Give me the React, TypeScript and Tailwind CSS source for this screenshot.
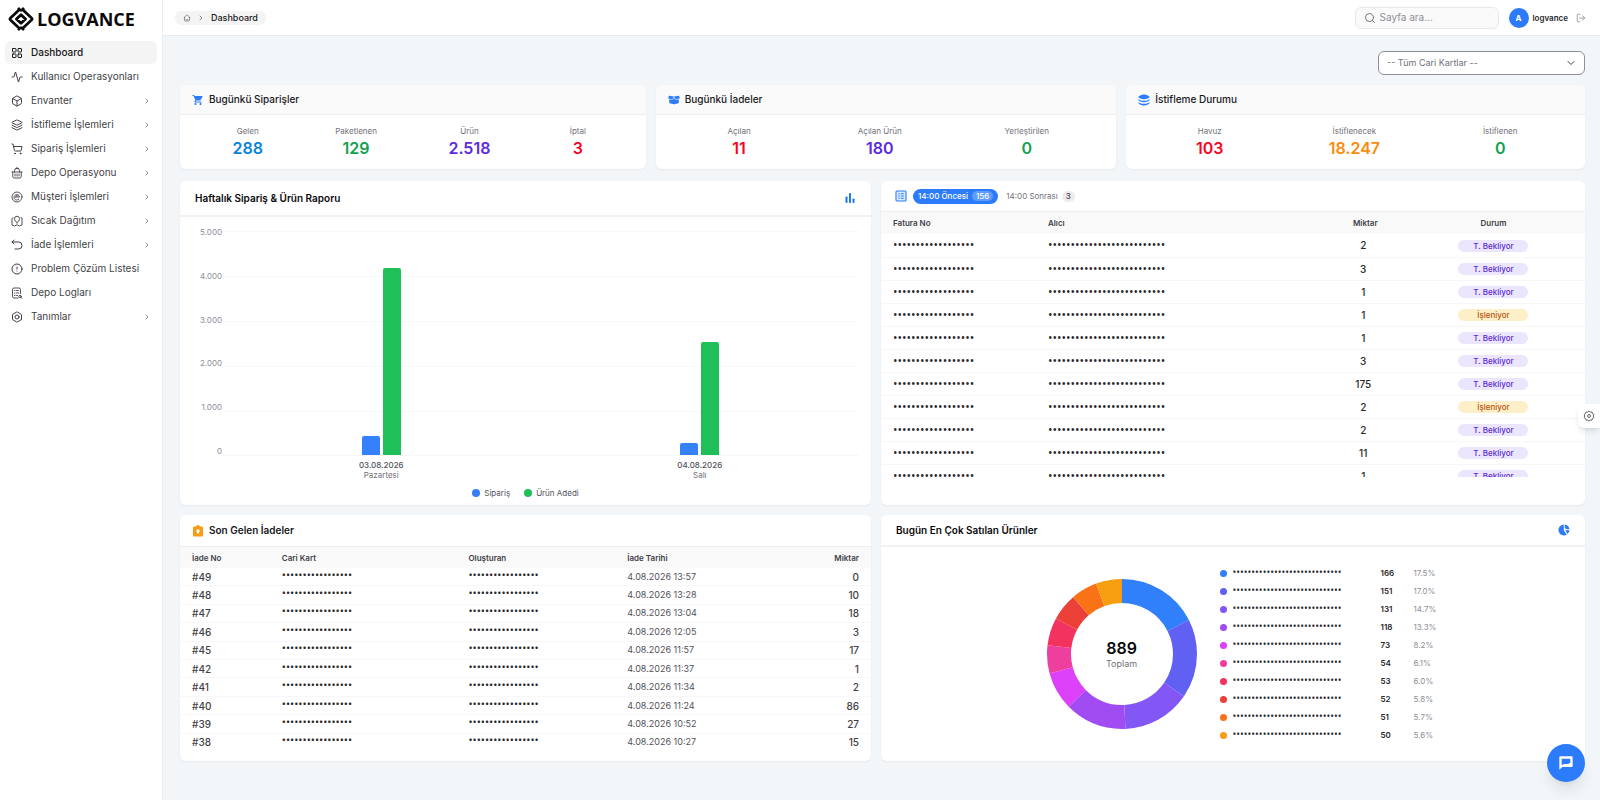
import React from 'react';
import {
  Activity,
  Bolt,
  Box,
  ChevronDown,
  ChevronRight,
  CircleAlert,
  Layers,
  LayoutGrid,
  LogOut,
  Search,
  ShoppingCart,
  type LucideIcon,
} from 'lucide-react';
import { FaBoxOpen } from 'react-icons/fa';
import { MdShoppingCart } from 'react-icons/md';

type IconProps = { className?: string };

const BasketIcon = ({ className }: IconProps) => (
  <svg viewBox="0 0 24 24" fill="none" stroke="currentColor" strokeWidth="1.8" strokeLinecap="round" strokeLinejoin="round" className={className}>
    <path d="M2 10h20M3.500 10v9a3 3 0 0 0 3 3h11a3 3 0 0 0 3-3v-9M7 10V7.500a5 5 0 0 1 10 0V10M8 14v4M12 14v4M16 14v4M10 3.500V2h4v1.500" />
  </svg>
);

const EuroIcon = ({ className }: IconProps) => (
  <svg viewBox="0 0 24 24" fill="none" stroke="currentColor" strokeWidth="1.8" strokeLinecap="round" className={className}>
    <circle cx="12" cy="12" r="10" />
    <path d="M15.500 16.500A5.500 5.500 0 1 1 17 12H9M9.500 12a2.800 2.800 0 0 1 4.500-2" />
  </svg>
);

const MapIcon = ({ className }: IconProps) => (
  <svg viewBox="0 0 24 24" fill="none" stroke="currentColor" strokeWidth="1.8" strokeLinecap="round" strokeLinejoin="round" className={className}>
    <path d="M12 15.500c-2.500-2.300-5-4.600-5-8a5 5 0 0 1 10 0c0 3.400-2.500 5.700-5 8z" />
    <path d="M4.500 5.500C3 5.500 2 6.500 2 8v12l5 2 5-2.500 5 2.500 5-2V6l-2-1" />
  </svg>
);

const BackIcon = ({ className }: IconProps) => (
  <svg viewBox="0 0 24 24" fill="none" stroke="currentColor" strokeWidth="2" strokeLinecap="round" strokeLinejoin="round" className={className}>
    <path d="M2 6h13a7 7 0 0 1 0 14H8M6 2 2 6l4 4" />
  </svg>
);

const LogIcon = ({ className }: IconProps) => (
  <svg viewBox="0 0 24 24" fill="none" stroke="currentColor" strokeWidth="1.8" strokeLinecap="round" strokeLinejoin="round" className={className}>
    <path d="M19 13V5a3 3 0 0 0-3-3H6a3 3 0 0 0-3 3v14a3 3 0 0 0 3 3h8M7 7h1M11 7h4M7 12h1M11 12h4M7 17h1M11 17h2" />
    <circle cx="18" cy="19" r="2.500" />
    <path d="m20 21 2 1.500" />
  </svg>
);

const HomeIcon = ({ className }: IconProps) => (
  <svg viewBox="0 0 24 24" fill="none" stroke="currentColor" strokeWidth="1.8" strokeLinecap="round" strokeLinejoin="round" className={className}>
    <path d="M3 11.500 10 3.800a3 3 0 0 1 4 0L21 11.500M4.500 10v8a3 3 0 0 0 3 3h9a3 3 0 0 0 3-3v-8M9 17h6" />
  </svg>
);

const GearIcon = ({ className }: IconProps) => (
  <svg viewBox="0 0 24 24" fill="none" stroke="currentColor" strokeWidth="1.8" strokeLinejoin="round" className={className}>
    <path d="M12 2l2.600 2.200 3.400-.2.900 3.300 2.900 1.800-1.300 3 1.300 3.100-2.900 1.800-.9 3.200-3.400-.1L12 22l-2.600-1.900-3.400.1-.9-3.200-2.900-1.800 1.300-3.100-1.300-3 2.900-1.800.9-3.300 3.400.2z" />
    <circle cx="12" cy="12" r="3" />
  </svg>
);

const LayersSolidIcon = ({ className }: IconProps) => (
  <svg viewBox="0 0 24 24" fill="currentColor" className={className}>
    <path d="M12 1C8 1 1 4 1 6s7 4.500 11 4.500S23 8 23 6s-7-5-11-5z" />
    <path d="M1 9.800c3 2.800 7 3.700 11 3.700s8-.9 11-3.700V12c0 2-7 4.500-11 4.500S1 14 1 12zM1 15.800c3 2.800 7 3.700 11 3.700s8-.9 11-3.700V18c0 2-7 5-11 5S1 20 1 18z" />
  </svg>
);

const BarsIcon = ({ className }: IconProps) => (
  <svg viewBox="0 0 24 24" fill="currentColor" className={className}>
    <rect x="3" y="9" width="4" height="13" rx="1.500" />
    <rect x="10" y="2" width="4" height="20" rx="1.500" />
    <rect x="17" y="13" width="4" height="9" rx="1.500" />
  </svg>
);

const ListIcon = ({ className }: IconProps) => (
  <svg viewBox="0 0 24 24" fill="none" stroke="currentColor" strokeWidth="2.200" className={className}>
    <rect x="2" y="2" width="20" height="20" rx="2" fill="#dbeafe" />
    <path d="M6.500 7.500h3M11.500 7.500h6M6.500 12h3M11.500 12h6M6.500 16.500h3M11.500 16.500h6" />
  </svg>
);

const ReturnIcon = ({ className }: IconProps) => (
  <svg viewBox="0 0 24 24" fill="currentColor" className={className}>
    <path d="M4 3h4.500a3.600 3.600 0 0 1 7 0H20a2 2 0 0 1 2 2v16a2 2 0 0 1-2 2H4a2 2 0 0 1-2-2V5a2 2 0 0 1 2-2z" />
    <path d="M12 7.500 17 13l-3 .2V17h-4v-3.800L7 13z" fill="#fff" />
  </svg>
);

const PieIcon = ({ className }: IconProps) => (
  <svg viewBox="0 0 24 24" fill="currentColor" className={className}>
    <path d="M11.500 1v11.500l6 9A11 11 0 1 1 11.500 1z" />
    <path d="M13.500 1A11 11 0 0 1 23 10.500h-5.500L13.500 8zM14.500 12.500H23a11 11 0 0 1-4 7.500z" />
  </svg>
);

const ChatIcon = ({ className }: IconProps) => (
  <svg viewBox="0 0 24 24" className={className}>
    <path d="M3.500 2h17A1.500 1.500 0 0 1 22 3.500v13a1.500 1.500 0 0 1-1.500 1.500H6.500L2 22V3.500A1.500 1.500 0 0 1 3.500 2z" fill="#fff" />
    <path d="M5.500 5.500h13v6l-3.500 2H9l-3.500 2z" fill="#2b7bfb" />
  </svg>
);

const LogoMark = ({ className }: IconProps) => (
  <svg viewBox="0 0 52 48" fill="none" stroke="#0a0a0a" strokeWidth="5.500" strokeLinejoin="round" className={className}>
    <path d="M20 2l3 3L5 22q-2 2 0 4l18 17-3 3M32 2l-3 3 18 17q2 2 0 4L29 43l3 3" />
    <path d="M26 15.500 17 24l9 8.500 9-8.500z" strokeWidth="6" />
    <path d="M23 5l3 2.500L29 5M23 43l3-2.500 3 2.500" strokeWidth="4" />
  </svg>
);

const menu: { icon: LucideIcon | React.FC<IconProps>; label: string; active?: boolean; sub?: boolean }[] = [
  { icon: LayoutGrid, label: 'Dashboard', active: true },
  { icon: Activity, label: 'Kullanıcı Operasyonları' },
  { icon: Box, label: 'Envanter', sub: true },
  { icon: Layers, label: 'İstifleme İşlemleri', sub: true },
  { icon: ShoppingCart, label: 'Sipariş İşlemleri', sub: true },
  { icon: BasketIcon, label: 'Depo Operasyonu', sub: true },
  { icon: EuroIcon, label: 'Müşteri İşlemleri', sub: true },
  { icon: MapIcon, label: 'Sıcak Dağıtım', sub: true },
  { icon: BackIcon, label: 'İade İşlemleri', sub: true },
  { icon: CircleAlert, label: 'Problem Çözüm Listesi' },
  { icon: LogIcon, label: 'Depo Logları' },
  { icon: Bolt, label: 'Tanımlar', sub: true },
];

const statCards = [
  {
    icon: MdShoppingCart,
    title: 'Bugünkü Siparişler',
    stats: [
      { label: 'Gelen', value: '288', color: 'text-[#0984d8]' },
      { label: 'Paketlenen', value: '129', color: 'text-[#12a150]' },
      { label: 'Ürün', value: '2.518', color: 'text-[#5b2be0]' },
      { label: 'İptal', value: '3', color: 'text-[#f5051f]' },
    ],
  },
  {
    icon: FaBoxOpen,
    title: 'Bugünkü İadeler',
    stats: [
      { label: 'Açılan', value: '11', color: 'text-[#f5051f]' },
      { label: 'Açılan Ürün', value: '180', color: 'text-[#5b2be0]' },
      { label: 'Yerleştirilen', value: '0', color: 'text-[#12a150]' },
    ],
  },
  {
    icon: LayersSolidIcon,
    title: 'İstifleme Durumu',
    stats: [
      { label: 'Havuz', value: '103', color: 'text-[#f5051f]' },
      { label: 'İstiflenecek', value: '18.247', color: 'text-[#fb8c0a]' },
      { label: 'İstiflenen', value: '0', color: 'text-[#12a150]' },
    ],
  },
];

const CHART_MAX = 5000;
const ticks = ['5.000', '4.000', '3.000', '2.000', '1.000', '0'];
const days = [
  { date: '03.08.2026', day: 'Pazartesi', orders: 435, items: 4180 },
  { date: '04.08.2026', day: 'Salı', orders: 275, items: 2520 },
];

const invoices = [
  { qty: 2 },
  { qty: 3 },
  { qty: 1 },
  { qty: 1, processing: true },
  { qty: 1 },
  { qty: 3 },
  { qty: 175 },
  { qty: 2, processing: true },
  { qty: 2 },
  { qty: 11 },
  { qty: 1 },
];

const returns = [
  { no: '#49', date: '4.08.2026 13:57', qty: 0 },
  { no: '#48', date: '4.08.2026 13:28', qty: 10 },
  { no: '#47', date: '4.08.2026 13:04', qty: 18 },
  { no: '#46', date: '4.08.2026 12:05', qty: 3 },
  { no: '#45', date: '4.08.2026 11:57', qty: 17 },
  { no: '#42', date: '4.08.2026 11:37', qty: 1 },
  { no: '#41', date: '4.08.2026 11:34', qty: 2 },
  { no: '#40', date: '4.08.2026 11:24', qty: 86 },
  { no: '#39', date: '4.08.2026 10:52', qty: 27 },
  { no: '#38', date: '4.08.2026 10:27', qty: 15 },
];

const products = [
  { qty: 166, share: '17.5%', color: '#3080fb' },
  { qty: 151, share: '17.0%', color: '#6060f2' },
  { qty: 131, share: '14.7%', color: '#8257f5' },
  { qty: 118, share: '13.3%', color: '#a14bf3' },
  { qty: 73, share: '8.2%', color: '#dc40f8' },
  { qty: 54, share: '6.1%', color: '#ee3f9f' },
  { qty: 53, share: '6.0%', color: '#f23360' },
  { qty: 52, share: '5.8%', color: '#ea4038' },
  { qty: 51, share: '5.7%', color: '#f97216' },
  { qty: 50, share: '5.6%', color: '#f79e10' },
];

const masked = (length: number) => '•'.repeat(length);

const Donut = () => {
  const radius = 63;
  const sum = products.reduce((acc, p) => acc + parseFloat(p.share), 0);
  let start = 0;

  return (
    <svg viewBox="0 0 152 152" className="w-38 h-38 -rotate-90">
      {products.map((p) => {
        const length = (parseFloat(p.share) / sum) * 100;
        const offset = start;
        start += length;
        return (
          <circle
            key={p.color}
            cx="76"
            cy="76"
            r={radius}
            fill="none"
            stroke={p.color}
            strokeWidth="24"
            pathLength="100"
            strokeDasharray={`${length} ${100 - length}`}
            strokeDashoffset={-offset}
          />
        );
      })}
    </svg>
  );
};

const Card = ({ className = '', children }: { className?: string; children: React.ReactNode }) => (
  <section className={`bg-white rounded-md shadow-xs overflow-hidden ${className}`}>{children}</section>
);

const Sidebar = () => (
  <aside className="w-[163px] shrink-0 bg-white border-r border-[#eceef0]">
    <a href="#" className="flex items-center gap-[3px] h-[37px] px-2 text-[#0a0a0a]">
      <LogoMark className="w-[26px] h-6" />
      <span className="font-['Open_Sans',sans-serif] text-lg leading-6 font-bold">LOGVANCE</span>
    </a>
    <nav className="flex flex-col gap-px px-[5px] pt-1">
      {menu.map((item) => (
        <a
          key={item.label}
          href="#"
          className={`flex items-center h-[23px] pl-1.5 pr-1.5 rounded-md text-[10px] ${
            item.active ? 'bg-[#f4f4f4] text-[#18181b] font-medium' : 'text-[#3f3f46]'
          }`}
        >
          <item.icon className="w-3 h-3 mr-2" />
          <span className="flex-1 whitespace-nowrap">{item.label}</span>
          {item.sub && <ChevronRight className="w-2 h-2 text-[#52525b]" />}
        </a>
      ))}
    </nav>
  </aside>
);

const Header = () => (
  <header className="flex items-center justify-between h-9 pl-3 pr-3.5 bg-white border-b border-[#e8eaed]">
    <nav aria-label="breadcrumb" className="flex items-center gap-1.5 h-3.5 px-2 rounded-md bg-[#f4f4f5] text-[9px]">
      <a href="#" aria-label="Ana sayfa">
        <HomeIcon className="w-2 h-2 text-[#52525b]" />
      </a>
      <ChevronRight className="w-2 h-2 text-[#52525b]" />
      <span className="font-medium text-[#18181b]">Dashboard</span>
    </nav>
    <div className="flex items-center">
      <label className="flex items-center gap-1 w-36 h-[22px] px-2 mr-2.5 rounded-md border border-[#e9e9ec] bg-[#fafafa]">
        <Search className="w-3 h-3 shrink-0 text-[#71717a]" />
        <input type="search" aria-label="Sayfa ara" placeholder="Sayfa ara..." className="w-full text-[10px] outline-none placeholder:text-[#8e8e96]" />
      </label>
      <span className="flex items-center justify-center w-5 h-5 mr-1 rounded-full bg-[#2b7bfb] text-[8px] font-bold text-white">A</span>
      <span className="mr-2 text-[8px] font-semibold text-[#27272a]">logvance</span>
      <button type="button" aria-label="Çıkış">
        <LogOut className="w-2.5 h-2.5 text-[#8e8e96]" />
      </button>
    </div>
  </header>
);

const WeeklyReport = () => (
  <Card className="flex flex-col">
    <div className="flex items-center justify-between h-9 px-[15px] border-b-2 border-[#f0f1f3]">
      <h2 className="text-[10px] font-semibold text-[#09090b]">Haftalık Sipariş & Ürün Raporu</h2>
      <BarsIcon className="w-3 h-3 text-[#1f76f2]" />
    </div>
    <div className="flex flex-1 pl-5 pr-3 pt-[9px]">
      <div className="flex flex-col justify-between w-[22px] h-[231px] text-right text-[8px] leading-3 text-[#8e8e96]">
        {ticks.map((tick) => (
          <span key={tick}>{tick}</span>
        ))}
      </div>
      <div className="flex-1 pt-[5px]">
        <div className="flex h-[225px] bg-[repeating-linear-gradient(#f9f9fa_0_1px,transparent_1px_45px)] border-b border-[#f7f7f8]">
          {days.map((d) => (
            <div key={d.date} className="flex flex-1 items-end justify-center gap-[3px]">
              <div className="w-[18px] rounded-t-xs bg-[#3580fb]" style={{ height: `${(d.orders / CHART_MAX) * 100}%` }} />
              <div className="w-[18px] rounded-t-xs bg-[#1fc05a]" style={{ height: `${(d.items / CHART_MAX) * 100}%` }} />
            </div>
          ))}
        </div>
        <div className="flex pt-1 text-center text-[8px] leading-[10px]">
          {days.map((d) => (
            <div key={d.date} className="flex-1">
              <div className="font-medium text-[#52525b]">{d.date}</div>
              <div className="text-[#71717a]">{d.day}</div>
            </div>
          ))}
        </div>
      </div>
    </div>
    <div className="flex justify-center gap-3.5 pb-1.5 text-[8px] leading-3 text-[#52525b]">
      <span className="flex items-center gap-1">
        <i className="w-2 h-2 rounded-full bg-[#3580fb]" />
        Sipariş
      </span>
      <span className="flex items-center gap-1">
        <i className="w-2 h-2 rounded-full bg-[#1fc05a]" />
        Ürün Adedi
      </span>
    </div>
  </Card>
);

const Invoices = () => (
  <Card className="pb-7">
    <div className="flex items-center h-[30px] px-3.5 text-[8px]">
      <ListIcon className="w-3 h-3 mr-1.5 text-[#2b7bfb]" />
      <button type="button" className="flex items-center gap-1 h-[15px] px-[5px] rounded-full bg-[#2b7bfb] font-medium text-white">
        14:00 Öncesi
        <span className="px-1 rounded-full bg-white/25 leading-[10px]">156</span>
      </button>
      <button type="button" className="flex items-center gap-1 h-[15px] px-2 text-[#71717a]">
        14:00 Sonrası
        <span className="px-1 rounded-full bg-[#ececee] leading-[11px] font-medium text-[#3f3f46]">3</span>
      </button>
    </div>
    {/* the last row scrolls under the bottom edge */}
    <div className="h-[266px] overflow-y-auto [scrollbar-width:none] border-t border-[#eceef0]">
      <table className="w-full table-fixed">
        <thead>
          <tr className="h-[22px] bg-[#f9f9fa] text-[8px] text-[#3f3f46]">
            <th className="w-[22%] pl-3 text-left font-semibold">Fatura No</th>
            <th className="pl-3 text-left font-semibold">Alıcı</th>
            <th className="w-[11%] pl-1 text-center font-semibold">Miktar</th>
            <th className="w-[26%] text-center font-semibold">Durum</th>
          </tr>
        </thead>
        <tbody>
          {invoices.map((row, index) => (
            <tr key={index} className="h-[23px] border-b border-[#f6f6f7]">
              <td className="pl-3 font-['Open_Sans',sans-serif] text-[12px] leading-4 text-[#27272a]">{masked(18)}</td>
              <td className="pl-3 font-['Open_Sans',sans-serif] text-[12px] leading-4 text-[#27272a]">{masked(26)}</td>
              <td className="text-center text-[10px] leading-4 font-medium text-[#27272a]">{row.qty}</td>
              <td className="text-center text-[8px]">
                <span
                  className={`inline-block w-[70px] rounded-full leading-3 font-medium align-middle ${
                    row.processing ? 'bg-[#fdf0c9] text-[#b9540c]' : 'bg-[#ebe5fd] text-[#5b2bd6]'
                  }`}
                >
                  {row.processing ? 'İşleniyor' : 'T. Bekliyor'}
                </span>
              </td>
            </tr>
          ))}
        </tbody>
      </table>
    </div>
  </Card>
);

const Returns = () => (
  <Card className="pb-2.5">
    <div className="flex items-center gap-[5px] h-8 px-3 border-b border-[#eceef0]">
      <ReturnIcon className="w-3 h-3 text-[#fb9a14]" />
      <h2 className="text-[10px] font-semibold text-[#18181b]">Son Gelen İadeler</h2>
    </div>
    <table className="w-full h-[204px] table-fixed text-[10px] leading-4 text-[#3f3f46]">
      <thead>
        <tr className="h-[21px] bg-[#f9f9fa] text-[8px]">
          <th className="w-[13%] pl-3 text-left font-semibold">İade No</th>
          <th className="w-[27%] pl-3 text-left font-semibold">Cari Kart</th>
          <th className="w-[23%] pl-3 text-left font-semibold">Oluşturan</th>
          <th className="pl-3 text-left font-semibold">İade Tarihi</th>
          <th className="w-[15%] pr-3 text-right font-semibold">Miktar</th>
        </tr>
      </thead>
      <tbody>
        {returns.map((row) => (
          <tr key={row.no} className="border-b border-[#f7f7f8] last:border-0">
            <td className="pl-3 font-medium">{row.no}</td>
            <td className="pl-3 pb-1 font-['Open_Sans',sans-serif] text-[11px] leading-3 text-[#27272a]">{masked(17)}</td>
            <td className="pl-3 pb-1 font-['Open_Sans',sans-serif] text-[11px] leading-3 text-[#27272a]">{masked(17)}</td>
            <td className="pl-3 text-[9px] text-[#52525b]">{row.date}</td>
            <td className="pr-3 text-right font-medium">{row.qty}</td>
          </tr>
        ))}
      </tbody>
    </table>
  </Card>
);

const BestSellers = () => (
  <Card className="flex flex-col">
    <div className="flex items-center justify-between h-8 px-[15px] border-b-2 border-[#f0f1f3]">
      <h2 className="text-[10px] font-semibold text-[#09090b]">Bugün En Çok Satılan Ürünler</h2>
      <PieIcon className="w-3 h-3 text-[#2b7bfb]" />
    </div>
    <div className="flex flex-1 items-center justify-center gap-[22px] pl-4">
      <div className="relative">
        <Donut />
        <div className="absolute inset-0 flex flex-col items-center justify-center">
          <strong className="text-base leading-5 font-semibold text-[#09090b]">889</strong>
          <span className="text-[9px] leading-3 text-[#71717a]">Toplam</span>
        </div>
      </div>
      <ul className="flex flex-col text-[8px]">
        {products.map((p) => (
          <li key={p.color} className="flex items-center h-[18px]">
            <i className="w-[7px] h-[7px] mr-1.5 rounded-full" style={{ backgroundColor: p.color }} />
            <span className="w-[148px] pb-0.5 font-['Open_Sans',sans-serif] text-[10px] leading-3 text-[#27272a]">{masked(29)}</span>
            <span className="w-[33px] font-semibold text-[#27272a]">{p.qty}</span>
            <span className="text-[#8e8e96]">{p.share}</span>
          </li>
        ))}
      </ul>
    </div>
  </Card>
);

const App = () => {
  return (
    <div className="flex min-h-screen bg-[#f3f6f8] font-['Inter',sans-serif]">
      <Sidebar />
      <div className="flex-1 min-w-0">
        <Header />
        <main className="flex flex-col px-[15px] pl-[17px] pt-[15px]">
          <div className="relative self-end w-[207px] mb-2.5">
            <select
              aria-label="Cari kart"
              className="block w-full h-6 pl-2 pr-6 appearance-none rounded-md border border-[#8e8e9a] bg-white text-[9px] text-[#71717a]"
            >
              <option>-- Tüm Cari Kartlar --</option>
            </select>
            <ChevronDown className="absolute right-2 top-1.5 w-3 h-3 text-[#3f3f46] pointer-events-none" />
          </div>

          <div className="grid grid-cols-[466fr_461fr_459fr] gap-2.5 mb-3">
            {statCards.map((card) => (
              <Card key={card.title}>
                <div className="flex items-center gap-[5px] h-[30px] px-3 border-b border-[#eceef0] bg-[#fafafa]">
                  <card.icon className="w-3 h-3 text-[#2b7bfb]" />
                  <h2 className="text-[10px] font-medium text-[#18181b]">{card.title}</h2>
                </div>
                <div className="flex justify-around px-4 py-2.5">
                  {card.stats.map((stat) => (
                    <div key={stat.label} className="min-w-8 text-center">
                      <div className="text-[8px] leading-3 text-[#71717a]">{stat.label}</div>
                      <div className={`text-base leading-[22px] font-semibold ${stat.color}`}>{stat.value}</div>
                    </div>
                  ))}
                </div>
              </Card>
            ))}
          </div>

          <div className="grid grid-cols-[691fr_704fr] gap-2.5 mb-2.5">
            <WeeklyReport />
            <Invoices />
          </div>

          <div className="grid grid-cols-[691fr_704fr] gap-2.5">
            <Returns />
            <BestSellers />
          </div>
        </main>
      </div>

      <button
        type="button"
        aria-label="Ayarlar"
        className="fixed right-0 top-[404px] flex items-center justify-center w-[22px] h-6 rounded-l-md bg-white shadow-md text-[#52525b]"
      >
        <GearIcon className="w-3 h-3" />
      </button>
      <button
        type="button"
        aria-label="Sohbet"
        className="fixed right-[15px] bottom-[18px] flex items-center justify-center w-[38px] h-[38px] rounded-full bg-[#2b7bfb] shadow-lg"
      >
        <ChatIcon className="w-4 h-4" />
      </button>
    </div>
  );
};

export default App;
